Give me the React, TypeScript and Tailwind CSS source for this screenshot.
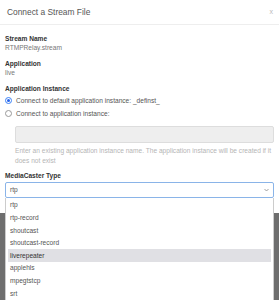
import React from 'react';

const options = ['rtp', 'rtp-record', 'shoutcast', 'shoutcast-record', 'liverepeater', 'applehls', 'mpegtstcp', 'srt'];

export default function App() {
  return (
    <div className="relative w-[279px] h-[300px] overflow-hidden bg-[#6e6e6e] font-['Liberation_Sans',Arial,sans-serif]">
      <div className="bg-white h-[213px]">
        <div className="flex items-center justify-between h-[25px] pl-[7px] pr-[6px] border-b border-[#eeeeee]">
          <span className="text-[8.4px] text-[#555]">Connect a Stream File</span>
          <span className="text-[7px] text-[#bbb]">x</span>
        </div>
        <div className="px-[5px] pt-[9px] text-[6.6px] leading-[9px] text-[#555]">
          <div className="font-bold text-[#333]">Stream Name</div>
          <div className="text-[#777]">RTMPRelay.stream</div>
          <div className="font-bold text-[#333] mt-[7px]">Application</div>
          <div className="text-[#777]">live</div>
          <div className="font-bold text-[#333] mt-[7px]">Application Instance</div>
          <div className="flex items-center gap-[4px] mt-[3px]">
            <span className="w-[7px] h-[7px] rounded-full border border-[#3b82f6] flex items-center justify-center">
              <span className="w-[3px] h-[3px] rounded-full bg-[#2563eb]" />
            </span>
            <span>Connect to default application instance: _definst_</span>
          </div>
          <div className="flex items-center gap-[4px] mt-[4px]">
            <span className="w-[7px] h-[7px] rounded-full border border-[#999]" />
            <span>Connect to application instance:</span>
          </div>
          <div className="ml-[10px] mt-[8px] h-[17px] bg-[#eeeeee] border border-[#ddd] rounded-[2px]" />
          <div className="ml-[10px] mt-[3px] text-[#b5b5b5] leading-[10px]">
            Enter an existing application instance name. The application instance will be created if it does not exist
          </div>
          <div className="font-bold text-[#333] mt-[5px]">MediaCaster Type</div>
        </div>
      </div>
      <div className="absolute left-[5px] top-[182px] w-[269px]">
        <div className="h-[16px] flex items-center justify-between px-[4px] bg-white border border-[#8ab4e8] rounded-[2px] text-[6.6px] text-[#555]">
          <span>rtp</span>
          <svg width="5" height="4" viewBox="0 0 5 4"><path d="M0.5 1 L2.5 3 L4.5 1" fill="none" stroke="#888" strokeWidth="0.8" /></svg>
        </div>
        <div className="bg-white border border-[#ccc] border-t-0 h-[110px] px-[2px] pt-[1px] text-[6.6px] text-[#555]">
          {options.map((o) => (
            <div key={o} className={`h-[12.6px] flex items-center px-[2px] ${o === 'liverepeater' ? 'bg-[#e0e0e4] text-[#333]' : ''}`}>
              {o}
            </div>
          ))}
        </div>
      </div>
    </div>
  );
}
